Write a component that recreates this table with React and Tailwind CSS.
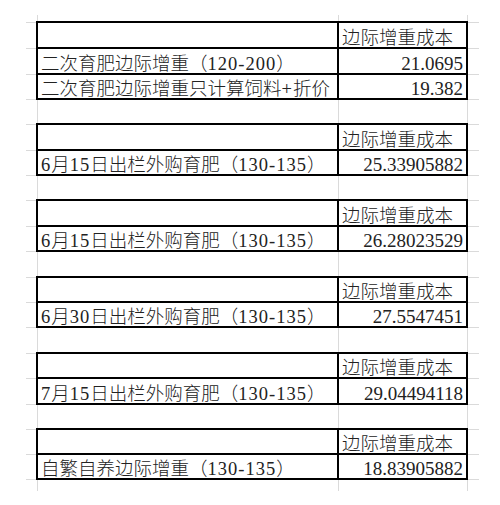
import React from "react";

const grid = "border-[#dadada]";

// row heights follow the black lines of each small table
const blocks = [
  {
    heights: ["h-[24px]", "h-[26px]", "h-[25px]"],
    stubs: ["h-[26px]", "h-[26px]", "h-[25px]"],
    rows: [
      ["二次育肥边际增重（120-200）", "21.0695"],
      ["二次育肥边际增重只计算饲料+折价", "19.382"],
    ],
    gap: "h-[23px]",
  },
  {
    heights: ["h-[24px]", "h-[25px]"],
    stubs: ["h-[26px]", "h-[25px]"],
    rows: [["6月15日出栏外购育肥（130-135）", "25.33905882"]],
    gap: "h-[23px]",
  },
  {
    heights: ["h-[24px]", "h-[25px]"],
    stubs: ["h-[26px]", "h-[25px]"],
    rows: [["6月15日出栏外购育肥（130-135）", "26.28023529"]],
    gap: "h-[24px]",
  },
  {
    heights: ["h-[23px]", "h-[25px]"],
    stubs: ["h-[25px]", "h-[25px]"],
    rows: [["6月30日出栏外购育肥（130-135）", "27.5547451"]],
    gap: "h-[24px]",
  },
  {
    heights: ["h-[23px]", "h-[26px]"],
    stubs: ["h-[25px]", "h-[26px]"],
    rows: [["7月15日出栏外购育肥（130-135）", "29.04494118"]],
    gap: "h-[23px]",
  },
  {
    heights: ["h-[23px]", "h-[25px]"],
    stubs: ["h-[25px]", "h-[25px]"],
    rows: [["自繁自养边际增重（130-135）", "18.83905882"]],
    gap: "h-[11px]",
  },
];

function GapRow({ h }) {
  return (
    <div className={`flex ${h}`}>
      <div className="w-[11px]" />
      <div className={`w-[301px] border-l ${grid}`} />
      <div className={`w-[129px] border-l ${grid}`} />
      <div className={`w-[11px] border-l ${grid}`} />
    </div>
  );
}

function Stub({ stubs, w }) {
  return (
    <div className={`${w} flex flex-col pt-[1px]`}>
      {stubs.map((s, i) => (
        <div key={i} className={`${s} border-t ${grid}`} />
      ))}
      <div className={`h-[1px] border-t ${grid}`} />
    </div>
  );
}

// the half-width digits in the labels sit a little wider apart
function Label({ text }) {
  return text.split(/([0-9+\-]+)/).map((part, i) =>
    i % 2 ? (
      <span key={i} className="tracking-[1px]">
        {part}
      </span>
    ) : (
      part
    )
  );
}

function Block({ block }) {
  return (
    <div className="flex">
      <Stub stubs={block.stubs} w="w-[10px]" />
      <div className="w-[432px] border-2 border-black flex flex-col">
        <div className={`flex ${block.heights[0]}`}>
          <div className="w-[299px]" />
          <div className="w-[129px] border-l-2 border-black flex items-end pl-[3px] text-[18.5px] leading-none">
            边际增重成本
          </div>
        </div>
        {block.rows.map(([label, value], i) => (
          <div key={i} className={`flex border-t-2 border-black ${block.heights[i + 1]}`}>
            <div className="w-[299px] flex items-end pl-[3px] text-[18.5px] leading-none whitespace-nowrap overflow-hidden">
              <span>
                <Label text={label} />
              </span>
            </div>
            <div className="w-[129px] border-l-2 border-black flex items-end justify-end pr-[3px] text-[19px] leading-none">
              {value}
            </div>
          </div>
        ))}
      </div>
      <Stub stubs={block.stubs} w="w-[11px]" />
    </div>
  );
}

export default function App() {
  return (
    <div
      className="w-[500px] h-[505px] bg-white text-[#222] font-light pt-[15px] pl-[26px]"
      style={{ fontFamily: '"Liberation Serif", "Noto Sans CJK SC", serif' }}
    >
      <div className="w-[453px] flex flex-col">
        <GapRow h="h-[6px]" />
        {blocks.map((b, i) => (
          <React.Fragment key={i}>
            <Block block={b} />
            <GapRow h={b.gap} />
          </React.Fragment>
        ))}
      </div>
    </div>
  );
}
